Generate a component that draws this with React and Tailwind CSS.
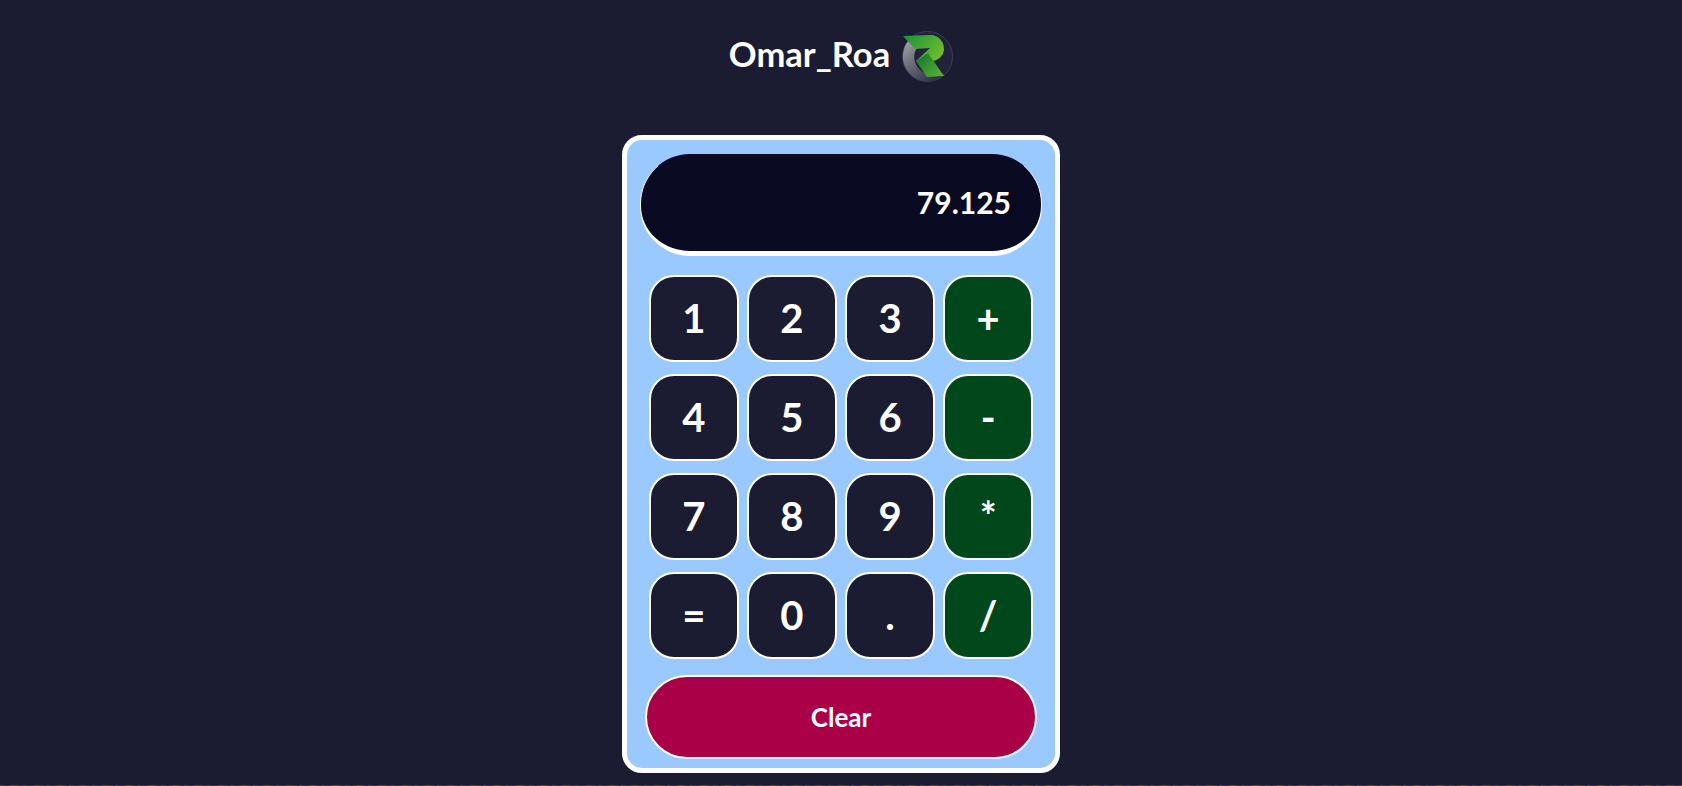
const rows = [
  ["1", "2", "3", "+"],
  ["4", "5", "6", "-"],
  ["7", "8", "9", "*"],
  ["=", "0", ".", "/"],
]

const operators = ["+", "-", "*", "/"]

function Logo() {
  return (
    <svg width="64" height="64" viewBox="0 0 64 64" className="shrink-0">
      <defs>
        <linearGradient id="ring" x1="0.1" y1="0.1" x2="0.7" y2="1">
          <stop offset="0" stopColor="#9a9ca0" />
          <stop offset="0.55" stopColor="#60626e" />
          <stop offset="1" stopColor="#33344f" />
        </linearGradient>
        <linearGradient id="top" x1="0" y1="0" x2="1" y2="0.7">
          <stop offset="0" stopColor="#17923a" />
          <stop offset="0.6" stopColor="#4fae30" />
          <stop offset="1" stopColor="#78c02f" />
        </linearGradient>
        <linearGradient id="leg" x1="0" y1="0" x2="1" y2="1">
          <stop offset="0" stopColor="#146f2e" />
          <stop offset="0.6" stopColor="#3b9c30" />
          <stop offset="1" stopColor="#62b32f" />
        </linearGradient>
      </defs>
      <circle cx="34.5" cy="31.5" r="25" fill="#22233a" stroke="#3c3d58" strokeWidth="1" />
      <path d="M17 14 A25 25 0 0 0 34.5 56.5 A25 25 0 0 0 48 52.5 L40 50 A19 19 0 0 1 22 37 C20 30 22 24 27 20 Z" fill="url(#ring)" />
      <path d="M10 11 L37 10 C46 10 51 17 51 24 C51 31 45 35 40 36 L31 42 L23 36 L37 23 L22 24 Z" fill="url(#top)" />
      <path d="M23 36 L35 28 L51 51 L34 52 Z" fill="url(#leg)" />
    </svg>
  )
}

function Key({ label }) {
  const isOperator = operators.includes(label)
  return (
    <button
      className={`h-[87px] pb-[2px] rounded-[25px] border-2 border-white text-white text-[40px] font-bold ${isOperator ? "bg-[#00471b]" : "bg-[#1b1b32]"}`}
    >
      {label}
    </button>
  )
}

export default function App() {
  return (
    <div className="h-[786px] overflow-hidden bg-[#1b1b32] flex flex-col items-center font-['Lato','Noto_Sans',sans-serif]">
      <div className="flex items-center gap-[3px] h-[64px] mt-[25px] ml-[4px] text-white text-[34.5px] font-bold">
        <h1 className="pb-[6px]">Omar_Roa</h1>
        <Logo />
      </div>

      <div className="mt-[46px] w-[438px] h-[638px] rounded-[20px] border-[5px] border-white bg-[#99c9ff] flex flex-col items-center">
        <div className="mt-[14px] w-[402px] h-[102px] rounded-[50px] border-b-[5px] border-x border-white bg-[#0a0a23] flex items-center justify-end pr-[30px] text-white text-[30px] font-bold">
          79.125
        </div>

        <div className="mt-[19px] w-[384px] grid grid-cols-4 gap-x-[8.5px] gap-y-[12px]">
          {rows.flat().map((label) => (
            <Key key={label} label={label} />
          ))}
        </div>

        <button className="mt-[16px] w-[392px] h-[84px] rounded-[50px] border-2 border-white bg-[#a90048] text-white text-[26px] font-bold">
          Clear
        </button>
      </div>

      {/* sliver of whatever sits below the fold */}
      <div className="mt-auto w-full h-px shrink-0 bg-[repeating-linear-gradient(90deg,#4a4a50_0px,#2a2a3c_7px,#5a5550_13px,#25253a_23px)]" />
    </div>
  )
}
